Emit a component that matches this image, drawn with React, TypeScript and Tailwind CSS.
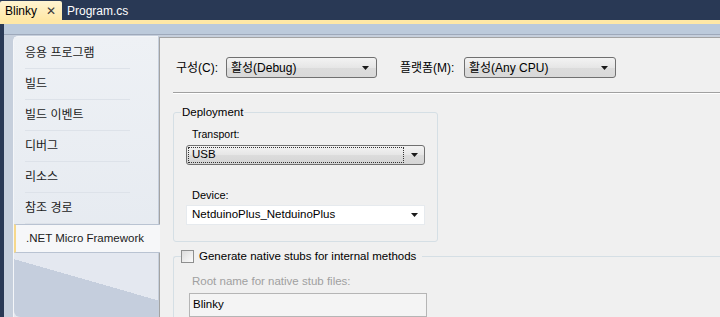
import React from 'react'

const FONT = '"Liberation Sans", "Noto Sans CJK KR", sans-serif'

const navItems = ['응용 프로그램', '빌드', '빌드 이벤트', '디버그', '리소스', '참조 경로']

function Arrow() {
  return (
    <svg width="7" height="4" viewBox="0 0 7 4" className="shrink-0">
      <path d="M0 0H7L3.5 4Z" fill="#1a1a1a" />
    </svg>
  )
}

function ComboBox({ value, width }: { value: string; width: string }) {
  return (
    <div
      className={`${width} h-[21px] flex items-center pl-[4px] pr-[7px] border border-[#707070] rounded-[3px] bg-[linear-gradient(#f3f3f3,#e6e6e6_50%,#dcdcdc_51%,#d9d9d9)] text-[12px] text-black`}
    >
      <span className="flex-1 leading-none">{value}</span>
      <Arrow />
    </div>
  )
}

export default function App() {
  return (
    <div
      className="w-[720px] h-[317px] overflow-hidden flex flex-col bg-[#293955] text-[12px]"
      style={{ fontFamily: FONT }}
    >
      {/* document tabs */}
      <div className="h-[20px] flex items-end">
        <div className="w-[62px] h-[19px] flex items-center pl-[5px] pr-[6px] rounded-t-[2px] bg-[linear-gradient(#fff4d2,#ffe8a6)] text-black">
          <span>Blinky</span>
          <span className="ml-auto text-[12px] leading-none text-[#3a3a3a]">✕</span>
        </div>
        <div className="h-[19px] flex items-center pl-[5px] text-white">Program.cs</div>
      </div>
      <div className="h-[4px] bg-[#ffe8a6]" />

      <div className="flex-1 flex min-h-0">
        <div className="w-[4px] bg-[#293955]" />
        <div className="flex-1 flex flex-col bg-[#c6cfdc]">
          <div className="h-[11px] bg-[#bccadb] border-b border-[#9ea9bb]" />

          <div className="flex-1 flex min-h-0 pt-[1px]">
            {/* property pages list */}
            <div className="ml-[9px] w-[145px] flex flex-col rounded-tl-[5px] border-t border-l border-[#f4f6f9] bg-[linear-gradient(#eef1f5,#e3e8ef)]">
              <div className="pt-[1px]">
                {navItems.map((item) => (
                  <div key={item} className="h-[31px] flex items-center pl-[11px]">
                    <div className="flex-1 h-full flex items-center border-b border-[#dde2e9] mr-[28px] text-[#1b1b1b]">
                      {item}
                    </div>
                  </div>
                ))}
              </div>
              <div className="h-[29px] flex items-center pl-[10px] -mr-[2px] border-l-2 border-[#f6d88c] border-y border-y-[#b9c3d2] bg-[#f6f7f9] text-[11.5px] text-[#1b1b1b] relative z-10">
                .NET Micro Framework
              </div>
              <div className="flex-1 rounded-bl-[6px] bg-[linear-gradient(196deg,#e4e8f0_45%,#c5cedd_45%)]" />
            </div>

            {/* page content */}
            <div className="flex-1 ml-[1px] mt-[1px] border-l border-t border-[#a3a3a3] bg-[#f0f0f0] text-black">
              <div className="mt-[19px] flex items-center pl-[16px]">
                <span className="w-[50px]">구성(C):</span>
                <ComboBox value="활성(Debug)" width="w-[151px]" />
                <span className="ml-[23px] w-[64px]">플랫폼(M):</span>
                <ComboBox value="활성(Any CPU)" width="w-[152px]" />
              </div>

              <div className="mt-[14px] ml-[13px] h-[2px] border-t border-[#a0a0a0] border-b border-b-white" />

              <fieldset className="mt-[10px] ml-[13px] w-[265px] border border-[#d5dfe5] rounded-[3px] px-[12px] pb-[16px] text-[11.5px]">
                <legend className="ml-[-5px] px-[1px] leading-[16px]">Deployment</legend>
                <div className="mt-[6px] ml-[6px] leading-[16px] text-[10.5px]">Transport:</div>
                <div className="mt-[3px] h-[20px] flex items-center border border-[#707070] rounded-[3px] bg-[linear-gradient(#f3f3f3,#e6e6e6_50%,#dcdcdc_51%,#d5d5d5)]">
                  <div className="ml-[1px] flex-1 h-[16px] flex items-center pl-[3px] border border-dotted border-[#333] leading-none">
                    USB
                  </div>
                  <div className="w-[20px] flex justify-center">
                    <Arrow />
                  </div>
                </div>
                <div className="mt-[22px] ml-[6px] leading-[16px] text-[11px]">Device:</div>
                <div className="mt-[2px] h-[20px] flex items-center pl-[5px] pr-[6px] bg-white border border-[#e6eaee]">
                  <span className="flex-1 leading-none">NetduinoPlus_NetduinoPlus</span>
                  <Arrow />
                </div>
              </fieldset>

              <fieldset className="mt-[6px] ml-[13px] border-l border-t border-[#d5dfe5] rounded-tl-[3px] pl-[15px] text-[11.5px]">
                <legend className="ml-[-8px] pr-[6px] leading-[16px] flex items-center text-[11.5px]">
                  <span className="w-[13px] h-[13px] border border-[#8e8f8f] bg-[linear-gradient(135deg,#dcdcdc,#fbfbfb)] mr-[5px]" />
                  Generate native stubs for internal methods
                </legend>
                <div className="mt-[9px] ml-[3px] leading-[16px] text-[#a0a0a0]">Root name for native stub files:</div>
                <div className="mt-[4px] w-[238px] h-[24px] flex items-center pl-[3px] border border-[#b5b5b5] bg-[#f4f4f4]">
                  Blinky
                </div>
              </fieldset>
            </div>
          </div>
        </div>
      </div>
    </div>
  )
}
